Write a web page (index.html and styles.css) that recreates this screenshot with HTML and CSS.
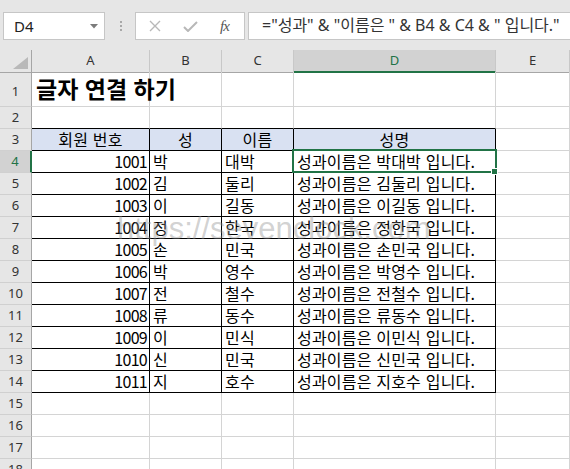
FILE: index.html
```html
<!DOCTYPE html>
<html lang="ko">
<head>
<meta charset="utf-8">
<title>글자 연결 하기</title>
<link rel="stylesheet" href="styles.css">
</head>
<body>
<div class="app">
  <div class="toolbar">
    <div class="namebox"><span>D4</span>
      <svg class="dd" width="8" height="5" viewBox="0 0 8 5"><path d="M0 0H8L4 4.5Z" fill="#7b7b7b"/></svg>
    </div>
    <div class="grip"><i></i><i></i><i></i></div>
    <div class="fbtns">
      <svg width="12" height="12" viewBox="0 0 12 12"><path d="M1 1L11 11M11 1L1 11" stroke="#b8b8b8" stroke-width="1.4" fill="none"/></svg>
      <svg width="15" height="11" viewBox="0 0 15 11"><path d="M1 6L5 10L14 1" stroke="#b8b8b8" stroke-width="2" fill="none"/></svg>
      <span class="fx">fx</span>
    </div>
    <div class="formula">="성과" &amp; "이름은 " &amp; B4 &amp; C4 &amp; " 입니다."</div>
  </div>

  <div class="sheet">
    <div class="row colhead">
      <div class="corner"><svg width="15" height="12" viewBox="0 0 15 12"><path d="M15 0V12H0Z" fill="#b9b9b9"/></svg></div>
      <div>A</div><div>B</div><div>C</div><div class="csel">D</div><div>E</div>
    </div>
    <div class="row r1">
      <div class="rh">1</div><div class="title">글자 연결 하기</div><div></div><div></div><div></div><div></div>
    </div>
    <div class="row">
      <div class="rh">2</div><div class="tt"></div><div class="tt"></div><div class="tt"></div><div class="tt"></div><div></div>
    </div>
    <div class="row">
      <div class="rh">3</div><div class="t th">회원 번호</div><div class="t th">성</div><div class="t th">이름</div><div class="t th">성명</div><div></div>
    </div>
    <div class="row">
      <div class="rh rsel">4</div><div class="t num">1001</div><div class="t">박</div><div class="t">대박</div><div class="t active">성과이름은 박대박 입니다.</div><div></div>
    </div>
    <div class="row">
      <div class="rh">5</div><div class="t num">1002</div><div class="t">김</div><div class="t">둘리</div><div class="t">성과이름은 김둘리 입니다.</div><div></div>
    </div>
    <div class="row">
      <div class="rh">6</div><div class="t num">1003</div><div class="t">이</div><div class="t">길동</div><div class="t">성과이름은 이길동 입니다.</div><div></div>
    </div>
    <div class="row">
      <div class="rh">7</div><div class="t num">1004</div><div class="t">정</div><div class="t">한국</div><div class="t">성과이름은 정한국 입니다.</div><div></div>
    </div>
    <div class="row">
      <div class="rh">8</div><div class="t num">1005</div><div class="t">손</div><div class="t">민국</div><div class="t">성과이름은 손민국 입니다.</div><div></div>
    </div>
    <div class="row">
      <div class="rh">9</div><div class="t num">1006</div><div class="t">박</div><div class="t">영수</div><div class="t">성과이름은 박영수 입니다.</div><div></div>
    </div>
    <div class="row">
      <div class="rh">10</div><div class="t num">1007</div><div class="t">전</div><div class="t">철수</div><div class="t">성과이름은 전철수 입니다.</div><div></div>
    </div>
    <div class="row">
      <div class="rh">11</div><div class="t num">1008</div><div class="t">류</div><div class="t">동수</div><div class="t">성과이름은 류동수 입니다.</div><div></div>
    </div>
    <div class="row">
      <div class="rh">12</div><div class="t num">1009</div><div class="t">이</div><div class="t">민식</div><div class="t">성과이름은 이민식 입니다.</div><div></div>
    </div>
    <div class="row">
      <div class="rh">13</div><div class="t num">1010</div><div class="t">신</div><div class="t">민국</div><div class="t">성과이름은 신민국 입니다.</div><div></div>
    </div>
    <div class="row">
      <div class="rh">14</div><div class="t num">1011</div><div class="t">지</div><div class="t">호수</div><div class="t">성과이름은 지호수 입니다.</div><div></div>
    </div>
    <div class="row">
      <div class="rh">15</div><div></div><div></div><div></div><div></div><div></div>
    </div>
    <div class="row">
      <div class="rh">16</div><div></div><div></div><div></div><div></div><div></div>
    </div>
    <div class="row">
      <div class="rh">17</div><div></div><div></div><div></div><div></div><div></div>
    </div>
    <div class="row">
      <div class="rh">18</div><div></div><div></div><div></div><div></div><div></div>
    </div>
  </div>
  <div class="watermark">https://sevenclock.com</div>
</div>
</body>
</html>
```

FILE: styles.css
```css
html, body {
  margin: 0;
  padding: 0;
  background: #ffffff;
  overflow: hidden;
}

.app {
  position: relative;
  width: 570px;
  height: 469px;
  overflow: hidden;
  font-family: "Noto Sans CJK KR", "Noto Sans", sans-serif;
}

/* ---------- formula bar ---------- */
.toolbar {
  height: 50px;
  background: #e6e6e6;
  display: flex;
  align-items: flex-start;
  padding-top: 12px;
  box-sizing: border-box;
}

.namebox {
  margin-left: 3px;
  width: 102px;
  height: 28px;
  box-sizing: border-box;
  background: #ffffff;
  border: 1px solid #c6c6c6;
  display: flex;
  align-items: center;
  justify-content: space-between;
  padding: 0 6px 0 10px;
  font: 15px "Noto Sans", sans-serif;
  color: #222;
}

.namebox span {
  line-height: 26px;
}

.grip {
  margin-left: 15px;
  margin-top: 9px;
  display: flex;
  flex-direction: column;
  gap: 2px;
}

.grip i {
  display: block;
  width: 2px;
  height: 2px;
  background: #a8a8a8;
}

.fbtns {
  margin-left: 13px;
  width: 110px;
  height: 28px;
  box-sizing: border-box;
  background: #ffffff;
  border: 1px solid #c6c6c6;
  display: flex;
  align-items: center;
  padding-left: 13px;
  gap: 22px;
}

.fx {
  font: italic 15px "Liberation Serif", serif;
  color: #555;
  letter-spacing: -1px;
}

.formula {
  margin-left: 3px;
  flex: 1;
  margin-right: -10px;
  height: 28px;
  box-sizing: border-box;
  background: #ffffff;
  border: 1px solid #c6c6c6;
  padding-left: 13px;
  font: 16px "Noto Sans", "Noto Sans CJK KR", sans-serif;
  line-height: 25px;
  color: #333;
  white-space: nowrap;
}

/* ---------- sheet ---------- */
.row {
  display: grid;
  grid-template-columns: 32px 118px 72px 72px 202px 1fr;
  height: 22px;
}

.row > div {
  box-sizing: border-box;
  border-right: 1px solid #d4d4d4;
  border-bottom: 1px solid #d4d4d4;
  font-size: 16px;
  line-height: 21px;
  padding: 0 3px;
  white-space: nowrap;
  color: #000;
}

.colhead > div {
  background: #e6e6e6;
  border-right-color: #c8c8c8;
  border-bottom-color: #a6a6a6;
  text-align: center;
  font: 13px "Noto Sans", sans-serif;
  line-height: 21px;
  color: #333;
}

.colhead > .corner {
  position: relative;
  border-right-color: #a6a6a6;
}

.corner svg {
  position: absolute;
  right: 3px;
  bottom: 3px;
}

.colhead > .csel {
  background: #d2d2d2;
  color: #217346;
  border-bottom: 2px solid #217346;
}

.row > .rh {
  background: #e6e6e6;
  border-right-color: #a6a6a6;
  border-bottom-color: #d0d0d0;
  text-align: center;
  font: 13px "Noto Sans", sans-serif;
  line-height: 21px;
  color: #333;
  padding: 0;
}

.row > .rsel {
  background: #d2d2d2;
  color: #217346;
  border-right: 2px solid #217346;
}

.r1 {
  height: 35px;
}

.r1 > .rh {
  line-height: 28px;
  padding-top: 5px;
}

.r1 > .title {
  font-weight: bold;
  font-size: 23px;
  line-height: 29px;
  padding-top: 2px;
  padding-left: 4px;
}

.row > .tt {
  border-bottom-color: #000;
}

.row > .t {
  border-right-color: #000;
  border-bottom-color: #000;
  letter-spacing: 0.2px;
}

.row > .th {
  background: #d9e1f2;
  text-align: center;
}

.row > .num {
  text-align: right;
  padding-right: 2px;
  letter-spacing: -0.7px;
}

.row > .active {
  position: relative;
}

.active::after {
  content: "";
  position: absolute;
  left: -2px;
  top: -2px;
  right: -2px;
  bottom: -1px;
  border: 2px solid #217346;
}

.active::before {
  content: "";
  position: absolute;
  right: -3px;
  bottom: -3px;
  width: 5px;
  height: 5px;
  background: #217346;
  border: 1px solid #ffffff;
  z-index: 2;
}

.watermark {
  position: absolute;
  left: 117px;
  top: 211px;
  font: 31px "Liberation Sans", sans-serif;
  color: rgba(140, 140, 140, 0.4);
  white-space: nowrap;
  pointer-events: none;
}
```
